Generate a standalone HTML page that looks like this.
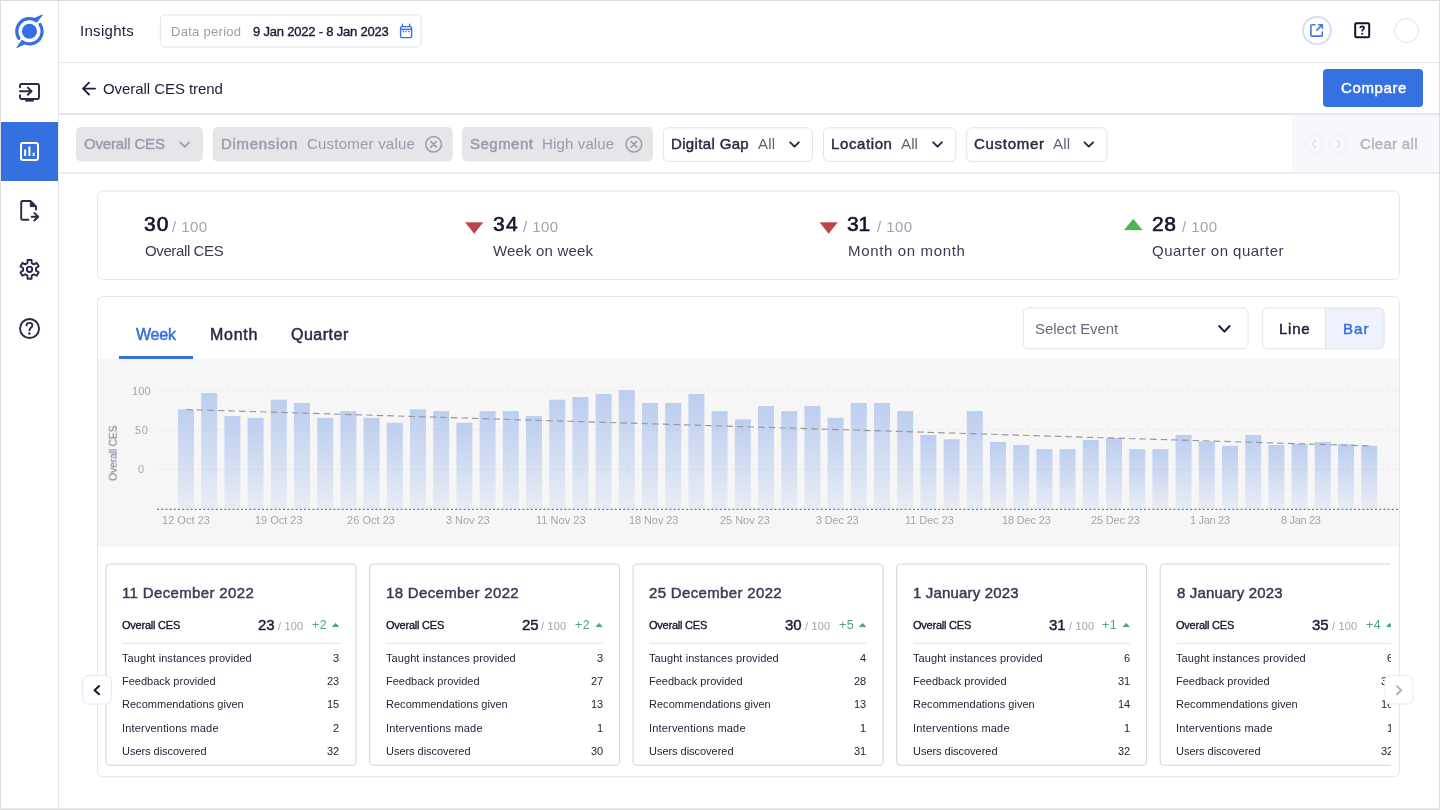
<!DOCTYPE html>
<html>
<head>
<meta charset="utf-8">
<title>Insights</title>
<style>
*{box-sizing:border-box;margin:0;padding:0}
html,body{width:1440px;height:810px;overflow:hidden;background:#fff}
body{font-family:"Liberation Sans",sans-serif;color:#1d1d3b;position:relative}
.abs{position:absolute}
svg{position:absolute;overflow:visible}
.t{position:absolute;white-space:nowrap;line-height:1;will-change:transform}
#frame{position:absolute;left:0;top:0;width:1440px;height:810px;border:1px solid #dcdcdc;border-bottom:0;box-shadow:inset 0 -1px 0 #dcdcdc, inset 0 -2px 0 #ebebeb;pointer-events:none;z-index:50}
#side{position:absolute;left:0;top:0;width:59px;height:810px;border-right:1px solid #e6e6ea;background:#fff}
#side .active{position:absolute;left:1px;top:122px;width:57px;height:59px;background:#366fe0}
.hline{position:absolute;left:59px;right:0;height:1px;background:#e8e8ec}
#clip{position:absolute;left:104px;top:560px;width:1287.4px;height:212px;overflow:hidden}
</style>
</head>
<body>

<div id="side"><div class="active"></div></div>
<!-- logo -->
<svg style="left:8px;top:8px" width="44" height="44" viewBox="0 0 44 44">
 <circle cx="21.46" cy="23.25" r="7.6" fill="#366fe0"/>
 <path d="M10.93 30.35 A12.7 12.7 0 0 1 28.38 12.6" fill="none" stroke="#366fe0" stroke-width="3.2" stroke-linecap="round"/>
 <path d="M32.11 16.33 A12.7 12.7 0 0 1 14.36 33.78" fill="none" stroke="#366fe0" stroke-width="3.2" stroke-linecap="round"/>
 <path d="M26.8 10.3 L34.4 6.9 L29.0 13.8 Z" fill="#366fe0" stroke="#366fe0" stroke-width="1" stroke-linejoin="round"/>
 <path d="M16.1 36.2 L8.8 39.4 L13.8 32.7 Z" fill="#366fe0" stroke="#366fe0" stroke-width="1" stroke-linejoin="round"/>
</svg>
<!-- monitor icon -->
<svg style="left:12px;top:74px" width="36" height="36" viewBox="0 0 36 36" fill="none" stroke="#2a2947" stroke-width="1.9">
 <path d="M8 13.2 V11.4 Q8 10 9.4 10 H25.6 Q27 10 27 11.4 V23.6 Q27 25 25.6 25 H9.4 Q8 25 8 23.6 V21.2" stroke-linecap="round"/>
 <path d="M8 17.2 H19.4 M15.8 13.6 L19.6 17.2 L15.8 20.8" stroke-linecap="round" stroke-linejoin="round"/>
 <rect x="13.3" y="25.6" width="8.5" height="2" fill="#2a2947" stroke="none"/>
</svg>
<!-- active icon -->
<svg style="left:20px;top:142px" width="19" height="19" viewBox="0 0 19 19" fill="none" stroke="#fff">
 <rect x="1" y="1" width="17" height="17" rx="2" stroke-width="2"/>
 <path d="M5.1 7.6 V13.9 M9.4 4.6 V13.9 M13.7 10.8 V13.9" stroke-width="2"/>
</svg>
<!-- doc export icon -->
<svg style="left:12px;top:192px" width="36" height="36" viewBox="0 0 36 36" fill="none" stroke="#2a2947" stroke-width="1.9" stroke-linecap="round" stroke-linejoin="round">
 <path d="M16.4 27.8 H10.6 Q9.2 27.8 9.2 26.4 V10.4 Q9.2 9 10.6 9 H18.5 L24 14.4 V17.6"/>
 <path d="M18.3 9.8 V14.6 H23.5 Z" fill="#2a2947" stroke-width="1"/>
 <path d="M19.6 24.7 H25.6 M22.3 20.9 L26.2 24.7 L22.3 28.5"/>
</svg>
<!-- gear -->
<svg style="left:12px;top:252px" width="36" height="36" viewBox="0 0 36 36" fill="none" stroke="#2a2947" stroke-width="1.9" stroke-linejoin="round">
 <path d="M15.44 11.09 L15.55 7.96 L19.55 7.96 L19.66 11.09 L21.91 12.40 L24.68 10.93 L26.68 14.38 L24.02 16.05 L24.02 18.65 L26.68 20.32 L24.68 23.77 L21.91 22.30 L19.66 23.61 L19.55 26.74 L15.55 26.74 L15.44 23.61 L13.19 22.30 L10.42 23.77 L8.42 20.32 L11.08 18.65 L11.08 16.05 L8.42 14.38 L10.42 10.93 L13.19 12.40Z"/>
 <circle cx="17.55" cy="17.35" r="2.7"/>
</svg>
<!-- help -->
<svg style="left:12px;top:310px" width="36" height="36" viewBox="0 0 36 36" fill="none" stroke="#2a2947" stroke-width="1.9" stroke-linecap="round" stroke-linejoin="round">
 <circle cx="17.55" cy="18.5" r="9.5"/>
 <path d="M14.5 15.4 Q14.6 12.9 17.5 12.9 Q20.4 12.9 20.4 15.3 Q20.4 16.8 18.6 18 Q17.5 18.9 17.5 20.2"/>
 <circle cx="17.4" cy="23.4" r="1.25" fill="#2a2947" stroke="none"/>
</svg>

<!-- top header -->
<svg style="left:398px;top:22px" width="18" height="18" viewBox="0 0 18 18" fill="none" stroke="#3a73e4" stroke-width="1.4">
 <rect x="2.6" y="4.6" width="11" height="11" rx="1.3"/>
 <path d="M2.6 7.4 H13.6" stroke-width="1.6"/>
 <path d="M4.5 2.2 V4.6 M11.6 2.2 V4.6" stroke-linecap="round"/>
 <path d="M4.7 9.6 H6.1 M7.4 9.6 H8.8 M10.2 9.6 H11.6" stroke-width="1.1"/>
</svg>
<div class="abs" style="left:1302px;top:15.5px;width:29.5px;height:29.5px;border:2px solid #d3dffa;border-radius:50%"></div>
<svg style="left:1309px;top:23px" width="15" height="15" viewBox="0 0 15 15" fill="none" stroke="#3f79e6" stroke-width="1.6" stroke-linejoin="round">
 <path d="M6.6 1.8 H3 Q1.9 1.8 1.9 2.9 V12 Q1.9 13.1 3 13.1 H12.2 Q13.3 13.1 13.3 12 V8.4"/>
 <path d="M7.4 7.6 L13.2 1.8 M9 1.8 H13.3 V6"/>
</svg>
<svg style="left:1353px;top:21px" width="18" height="18" viewBox="0 0 18 18" fill="none" stroke="#14142e">
 <rect x="2.2" y="2.2" width="14" height="14" rx="1.2" stroke-width="2"/>
 <path d="M7.2 7 Q7.3 5.3 9.2 5.3 Q11.1 5.3 11.1 6.9 Q11.1 7.9 10 8.6 Q9.2 9.2 9.2 10.4" stroke-width="1.7"/>
 <circle cx="9.2" cy="12.8" r="1.05" fill="#14142e" stroke="none"/>
</svg>
<div class="abs" style="left:1394px;top:18px;width:25px;height:25px;border:1px solid #e2e2e4;border-radius:50%"></div>
<div class="hline" style="top:62px"></div>

<!-- sub header -->
<svg style="left:80px;top:80px" width="18" height="18" viewBox="0 0 18 18" fill="none" stroke="#1d1d3b" stroke-width="1.8" stroke-linecap="round" stroke-linejoin="round">
 <path d="M15.1 8.6 H3.2 M9 2.7 L3 8.6 L9 14.5"/>
</svg>
<div class="abs" style="left:1323.3px;top:69px;width:100px;height:38px;background:#3671e2;border-radius:4px"></div>
<div class="hline" style="top:113px;height:2px;background:#e7e7e9"></div>

<!-- filter bar -->
<div class="abs" style="left:1292px;top:115px;width:147px;height:57px;background:#f7f8fd"></div>
<div class="abs" style="left:1304.5px;top:135px;width:18px;height:18px;border:1px solid #eeeef3;border-radius:50%;background:#f9f9fd"></div>
<div class="abs" style="left:1329px;top:135px;width:18px;height:18px;border:1px solid #eeeef3;border-radius:50%;background:#f9f9fd"></div>
<svg style="left:1304.5px;top:135px" width="43" height="18" viewBox="0 0 43 18" fill="none" stroke="#dcdce4" stroke-width="1.4" stroke-linecap="round" stroke-linejoin="round">
 <path d="M10.4 5.6 L7.2 9 L10.4 12.4 M32.2 5.6 L35.4 9 L32.2 12.4"/>
</svg>
<svg style="left:0;top:0" width="1440" height="200" viewBox="0 0 1440 200">
 <rect x="160.3" y="14.9" width="260.9" height="32.1" rx="4.5" fill="none" stroke="#e3e3e9"/>
 <rect x="76" y="127" width="127" height="34.5" rx="5" fill="#e6e6e9"/>
 <rect x="212.7" y="127" width="240" height="34.5" rx="5" fill="#e6e6e9"/>
 <rect x="462" y="127" width="191" height="34.5" rx="5" fill="#e6e6e9"/>
 <rect x="663.3" y="127.8" width="149.2" height="33.6" rx="5" fill="#fff" stroke="#e3e3e9"/>
 <rect x="823.5" y="127.8" width="132.3" height="33.6" rx="5" fill="#fff" stroke="#e3e3e9"/>
 <rect x="966.7" y="127.8" width="140.3" height="33.6" rx="5" fill="#fff" stroke="#e3e3e9"/>
</svg>
<svg style="left:0;top:0" width="1440" height="200" viewBox="0 0 1440 200" fill="none" stroke-linecap="round" stroke-linejoin="round">
 <path d="M180.3 142.4 L184.7 146.8 L189.1 142.4" stroke="#9b9aaa" stroke-width="1.7"/>
 <g stroke="#9b9aaa" stroke-width="1.5">
  <circle cx="433.6" cy="144.3" r="7.8"/><path d="M430.8 141.5 L436.4 147.1 M436.4 141.5 L430.8 147.1"/>
  <circle cx="633.9" cy="144.3" r="7.8"/><path d="M631.1 141.5 L636.7 147.1 M636.7 141.5 L631.1 147.1"/>
 </g>
 <g stroke="#2a2a48" stroke-width="1.9">
  <path d="M790.2 142.3 L794.5 146.6 L798.8 142.3"/>
  <path d="M933.2 142.3 L937.5 146.6 L941.8 142.3"/>
  <path d="M1084.5 142.3 L1088.8 146.6 L1093.1 142.3"/>
 </g>
</svg>
<div class="hline" style="top:172px;height:2px;background:#ededf0"></div>

<!-- stats -->
<svg style="left:0;top:185px" width="1440" height="100" viewBox="0 185 1440 100"><rect x="97.5" y="191" width="1302" height="88.5" rx="6" fill="#fff" stroke="#e5e5ea" stroke-width="1"/></svg>
<svg style="left:0;top:200px" width="1440" height="50" viewBox="0 200 1440 50">
 <path d="M465.4 222.6 H482.9 L474.15 233.5 Z M819.9 222.6 H837.4 L828.65 233.5 Z" fill="#bb4549" stroke="#bb4549" stroke-width="0.4" stroke-linejoin="round"/>
 <path d="M1124.3 229.9 H1142.2 L1133.25 219.1 Z" fill="#4cb750" stroke="#4cb750" stroke-width="0.4" stroke-linejoin="round"/>
</svg>

<!-- chart card -->
<svg style="left:0;top:290px" width="1440" height="495" viewBox="0 290 1440 495"><rect x="97.5" y="296.5" width="1302" height="480.2" rx="6" fill="#fff" stroke="#e5e5ea" stroke-width="1"/></svg>
<div class="abs" style="left:119px;top:356px;width:74px;height:3px;background:#366fe0"></div>
<svg style="left:1000px;top:300px" width="400" height="56" viewBox="1000 300 400 56">
 <rect x="1023.3" y="307.9" width="224.8" height="40.9" rx="5" fill="#fff" stroke="#e3e3e9"/>
 <path d="M1325.5 307.9 H1379.2 Q1384.2 307.9 1384.2 312.9 V343.8 Q1384.2 348.8 1379.2 348.8 H1325.5 Z" fill="#edf2fd"/>
 <rect x="1262.7" y="307.9" width="121.5" height="40.9" rx="5" fill="none" stroke="#e3e3e9"/>
 <path d="M1325.5 307.9 V348.8" stroke="#e3e3e9"/>
</svg>
<svg style="left:1216px;top:322px" width="16" height="14" viewBox="0 0 16 14" fill="none" stroke="#1d1d3b" stroke-width="2" stroke-linecap="round" stroke-linejoin="round"><path d="M3.2 4 L8.4 9.6 L13.6 4"/></svg>

<div class="abs" style="left:98px;top:359px;width:1301px;height:187.5px;background:#f6f6f6"></div>
<svg style="left:98px;top:359px" width="1301" height="188" viewBox="98 359 1301 188">
<defs><linearGradient id="bg" x1="0" y1="0" x2="0" y2="1"><stop offset="0" stop-color="#366fe0" stop-opacity="0.3"/><stop offset="1" stop-color="#366fe0" stop-opacity="0.07"/></linearGradient></defs>
<path d="M157 390.6 H1398" stroke="#e4e4e6" stroke-width="1" stroke-dasharray="2 3"/>
<path d="M157 430 H1398" stroke="#e4e4e6" stroke-width="1" stroke-dasharray="2 3"/>
<path d="M157 469.4 H1398" stroke="#e4e4e6" stroke-width="1" stroke-dasharray="2 3"/>
<rect x="178.0" y="409.4" width="16" height="99.6" fill="url(#bg)"/>
<rect x="201.2" y="393.0" width="16" height="116.0" fill="url(#bg)"/>
<rect x="224.4" y="416.1" width="16" height="92.9" fill="url(#bg)"/>
<rect x="247.6" y="417.8" width="16" height="91.2" fill="url(#bg)"/>
<rect x="270.8" y="399.7" width="16" height="109.3" fill="url(#bg)"/>
<rect x="294.0" y="403.0" width="16" height="106.0" fill="url(#bg)"/>
<rect x="317.2" y="417.8" width="16" height="91.2" fill="url(#bg)"/>
<rect x="340.4" y="411.1" width="16" height="97.9" fill="url(#bg)"/>
<rect x="363.6" y="417.8" width="16" height="91.2" fill="url(#bg)"/>
<rect x="386.8" y="422.8" width="16" height="86.2" fill="url(#bg)"/>
<rect x="410.0" y="409.4" width="16" height="99.6" fill="url(#bg)"/>
<rect x="433.2" y="411.1" width="16" height="97.9" fill="url(#bg)"/>
<rect x="456.4" y="422.8" width="16" height="86.2" fill="url(#bg)"/>
<rect x="479.6" y="411.1" width="16" height="97.9" fill="url(#bg)"/>
<rect x="502.8" y="411.1" width="16" height="97.9" fill="url(#bg)"/>
<rect x="526.0" y="416.1" width="16" height="92.9" fill="url(#bg)"/>
<rect x="549.2" y="399.7" width="16" height="109.3" fill="url(#bg)"/>
<rect x="572.4" y="397.0" width="16" height="112.0" fill="url(#bg)"/>
<rect x="595.6" y="393.9" width="16" height="115.1" fill="url(#bg)"/>
<rect x="618.8" y="390.3" width="16" height="118.7" fill="url(#bg)"/>
<rect x="642.0" y="403.0" width="16" height="106.0" fill="url(#bg)"/>
<rect x="665.2" y="403.0" width="16" height="106.0" fill="url(#bg)"/>
<rect x="688.4" y="393.9" width="16" height="115.1" fill="url(#bg)"/>
<rect x="711.6" y="411.1" width="16" height="97.9" fill="url(#bg)"/>
<rect x="734.8" y="419.4" width="16" height="89.6" fill="url(#bg)"/>
<rect x="758.0" y="406.1" width="16" height="102.9" fill="url(#bg)"/>
<rect x="781.2" y="411.1" width="16" height="97.9" fill="url(#bg)"/>
<rect x="804.4" y="406.1" width="16" height="102.9" fill="url(#bg)"/>
<rect x="827.6" y="417.8" width="16" height="91.2" fill="url(#bg)"/>
<rect x="850.8" y="403.0" width="16" height="106.0" fill="url(#bg)"/>
<rect x="874.0" y="403.0" width="16" height="106.0" fill="url(#bg)"/>
<rect x="897.2" y="411.1" width="16" height="97.9" fill="url(#bg)"/>
<rect x="920.4" y="435.0" width="16" height="74.0" fill="url(#bg)"/>
<rect x="943.6" y="439.2" width="16" height="69.8" fill="url(#bg)"/>
<rect x="966.8" y="411.1" width="16" height="97.9" fill="url(#bg)"/>
<rect x="990.0" y="441.9" width="16" height="67.1" fill="url(#bg)"/>
<rect x="1013.2" y="445.0" width="16" height="64.0" fill="url(#bg)"/>
<rect x="1036.4" y="449.2" width="16" height="59.8" fill="url(#bg)"/>
<rect x="1059.6" y="449.2" width="16" height="59.8" fill="url(#bg)"/>
<rect x="1082.8" y="440.0" width="16" height="69.0" fill="url(#bg)"/>
<rect x="1106.0" y="438.0" width="16" height="71.0" fill="url(#bg)"/>
<rect x="1129.2" y="449.2" width="16" height="59.8" fill="url(#bg)"/>
<rect x="1152.4" y="449.2" width="16" height="59.8" fill="url(#bg)"/>
<rect x="1175.6" y="435.0" width="16" height="74.0" fill="url(#bg)"/>
<rect x="1198.8" y="441.4" width="16" height="67.6" fill="url(#bg)"/>
<rect x="1222.0" y="445.8" width="16" height="63.2" fill="url(#bg)"/>
<rect x="1245.2" y="435.0" width="16" height="74.0" fill="url(#bg)"/>
<rect x="1268.4" y="445.0" width="16" height="64.0" fill="url(#bg)"/>
<rect x="1291.6" y="443.9" width="16" height="65.1" fill="url(#bg)"/>
<rect x="1314.8" y="441.9" width="16" height="67.1" fill="url(#bg)"/>
<rect x="1338.0" y="444.2" width="16" height="64.8" fill="url(#bg)"/>
<rect x="1361.2" y="445.8" width="16" height="63.2" fill="url(#bg)"/>
<path d="M186 409.5 L1369 445.9" stroke="#989898" stroke-width="1.15" stroke-dasharray="6.5 4.1" fill="none"/>
<path d="M157 509.3 H1399" stroke="#5c5c66" stroke-width="1" stroke-dasharray="2 2.2"/>
</svg>
<div class="t" style="left:82.9px;top:447.9px;width:60px;text-align:center;font-size:10.5px;color:#77778b;transform:rotate(-90deg);letter-spacing:-0.22px">Overall CES</div>
<div class="t" style="left:79.80px;top:23.30px;font-size:15px;color:#1d1d3b;letter-spacing:0.300px;">Insights</div>
<div class="t" style="left:170.90px;top:25.20px;font-size:13px;color:#9c9cab;letter-spacing:0.288px;">Data period</div>
<div class="t" style="left:253.40px;top:25.20px;font-size:13px;color:#1d1d3b;-webkit-text-stroke:0.40px #1d1d3b;letter-spacing:-0.206px;">9 Jan 2022 - 8 Jan 2023</div>
<div class="t" style="left:103.20px;top:80.90px;font-size:15px;color:#1d1d3b;letter-spacing:-0.062px;">Overall CES trend</div>
<div class="t" style="left:1341.10px;top:80.20px;font-size:15px;color:#fff;-webkit-text-stroke:0.46px #fff;letter-spacing:0.616px;">Compare</div>
<div class="t" style="left:84.40px;top:136.30px;font-size:15px;color:#9b9aaa;-webkit-text-stroke:0.46px #9b9aaa;letter-spacing:-0.163px;">Overall CES</div>
<div class="t" style="left:221.30px;top:136.30px;font-size:15px;color:#9b9aaa;-webkit-text-stroke:0.46px #9b9aaa;letter-spacing:0.691px;">Dimension</div>
<div class="t" style="left:306.90px;top:136.30px;font-size:15px;color:#9b9aaa;letter-spacing:0.219px;">Customer value</div>
<div class="t" style="left:470.15px;top:136.30px;font-size:15px;color:#9b9aaa;-webkit-text-stroke:0.46px #9b9aaa;letter-spacing:0.484px;">Segment</div>
<div class="t" style="left:541.90px;top:136.30px;font-size:15px;color:#9b9aaa;letter-spacing:0.145px;">High value</div>
<div class="t" style="left:670.90px;top:136.30px;font-size:15px;color:#2a2a48;-webkit-text-stroke:0.46px #2a2a48;letter-spacing:0.350px;">Digital Gap</div>
<div class="t" style="left:757.90px;top:136.30px;font-size:15px;color:#5e5e74;letter-spacing:0.264px;">All</div>
<div class="t" style="left:831.15px;top:136.30px;font-size:15px;color:#2a2a48;-webkit-text-stroke:0.46px #2a2a48;letter-spacing:0.604px;">Location</div>
<div class="t" style="left:901.40px;top:136.30px;font-size:15px;color:#5e5e74;letter-spacing:0.139px;">All</div>
<div class="t" style="left:974.40px;top:136.30px;font-size:15px;color:#2a2a48;-webkit-text-stroke:0.46px #2a2a48;letter-spacing:0.703px;">Customer</div>
<div class="t" style="left:1052.65px;top:136.30px;font-size:15px;color:#5e5e74;letter-spacing:0.264px;">All</div>
<div class="t" style="left:1360.40px;top:136.30px;font-size:15px;color:#b4b4bd;-webkit-text-stroke:0.46px #b4b4bd;letter-spacing:0.309px;">Clear all</div>
<div class="t" style="left:144.10px;top:213.42px;font-size:21px;color:#15152f;-webkit-text-stroke:0.65px #15152f;letter-spacing:1.141px;">30</div>
<div class="t" style="left:171.90px;top:218.50px;font-size:15px;color:#a3a3b1;letter-spacing:0.406px;">/ 100</div>
<div class="t" style="left:144.90px;top:243.30px;font-size:15px;color:#3a3a56;letter-spacing:-0.383px;">Overall CES</div>
<div class="t" style="left:493.10px;top:213.42px;font-size:21px;color:#15152f;-webkit-text-stroke:0.65px #15152f;letter-spacing:1.441px;">34</div>
<div class="t" style="left:522.80px;top:218.50px;font-size:15px;color:#a3a3b1;letter-spacing:0.456px;">/ 100</div>
<div class="t" style="left:493.10px;top:243.30px;font-size:15px;color:#3a3a56;letter-spacing:0.163px;">Week on week</div>
<div class="t" style="left:847.10px;top:213.42px;font-size:21px;color:#15152f;-webkit-text-stroke:0.65px #15152f;letter-spacing:-0.259px;">31</div>
<div class="t" style="left:877.00px;top:218.50px;font-size:15px;color:#a3a3b1;letter-spacing:0.456px;">/ 100</div>
<div class="t" style="left:847.70px;top:243.30px;font-size:15px;color:#3a3a56;letter-spacing:0.653px;">Month on month</div>
<div class="t" style="left:1152.40px;top:213.42px;font-size:21px;color:#15152f;-webkit-text-stroke:0.65px #15152f;letter-spacing:0.541px;">28</div>
<div class="t" style="left:1181.60px;top:218.50px;font-size:15px;color:#a3a3b1;letter-spacing:0.456px;">/ 100</div>
<div class="t" style="left:1152.30px;top:243.30px;font-size:15px;color:#3a3a56;letter-spacing:0.476px;">Quarter on quarter</div>
<div class="t" style="left:135.65px;top:327.06px;font-size:16px;color:#366fe0;-webkit-text-stroke:0.50px #366fe0;letter-spacing:-0.220px;">Week</div>
<div class="t" style="left:210.00px;top:327.06px;font-size:16px;color:#2a2a48;-webkit-text-stroke:0.50px #2a2a48;letter-spacing:0.708px;">Month</div>
<div class="t" style="left:291.30px;top:327.06px;font-size:16px;color:#2a2a48;-webkit-text-stroke:0.50px #2a2a48;letter-spacing:0.508px;">Quarter</div>
<div class="t" style="left:1034.90px;top:320.90px;font-size:15px;color:#6a6a80;letter-spacing:-0.093px;">Select Event</div>
<div class="t" style="left:1278.60px;top:320.90px;font-size:15px;color:#1d1d3b;-webkit-text-stroke:0.46px #1d1d3b;letter-spacing:0.747px;">Line</div>
<div class="t" style="left:1343.00px;top:320.90px;font-size:15px;color:#366fe0;-webkit-text-stroke:0.46px #366fe0;letter-spacing:1.028px;">Bar</div>
<div class="t" style="left:132.00px;top:385.89px;font-size:11px;color:#a5a5b0;letter-spacing:0.120px;">100</div>
<div class="t" style="left:134.90px;top:425.09px;font-size:11px;color:#a5a5b0;letter-spacing:0.650px;">50</div>
<div class="t" style="left:137.50px;top:464.49px;font-size:11px;color:#a5a5b0;">0</div>
<div class="t" style="left:161.70px;top:514.59px;font-size:11px;color:#a5a5b0;letter-spacing:0.025px;">12 Oct 23</div>
<div class="t" style="left:254.70px;top:514.59px;font-size:11px;color:#a5a5b0;letter-spacing:-0.025px;">19 Oct 23</div>
<div class="t" style="left:347.20px;top:514.59px;font-size:11px;color:#a5a5b0;letter-spacing:0.037px;">26 Oct 23</div>
<div class="t" style="left:445.90px;top:514.59px;font-size:11px;color:#a5a5b0;letter-spacing:-0.047px;">3 Nov 23</div>
<div class="t" style="left:536.10px;top:514.59px;font-size:11px;color:#a5a5b0;letter-spacing:0.021px;">11 Nov 23</div>
<div class="t" style="left:628.70px;top:514.59px;font-size:11px;color:#a5a5b0;letter-spacing:-0.095px;">18 Nov 23</div>
<div class="t" style="left:719.80px;top:514.59px;font-size:11px;color:#a5a5b0;letter-spacing:-0.045px;">25 Nov 23</div>
<div class="t" style="left:816.10px;top:514.59px;font-size:11px;color:#a5a5b0;letter-spacing:-0.190px;">3 Dec 23</div>
<div class="t" style="left:905.40px;top:514.59px;font-size:11px;color:#a5a5b0;letter-spacing:-0.066px;">11 Dec 23</div>
<div class="t" style="left:1001.70px;top:514.59px;font-size:11px;color:#a5a5b0;letter-spacing:-0.157px;">18 Dec 23</div>
<div class="t" style="left:1090.90px;top:514.59px;font-size:11px;color:#a5a5b0;letter-spacing:-0.157px;">25 Dec 23</div>
<div class="t" style="left:1189.60px;top:514.59px;font-size:11px;color:#a5a5b0;letter-spacing:-0.315px;">1 Jan 23</div>
<div class="t" style="left:1281.20px;top:514.59px;font-size:11px;color:#a5a5b0;letter-spacing:-0.329px;">8 Jan 23</div>
<div id="clip">
<svg style="left:0;top:0" width="1290" height="212" viewBox="0 0 1290 212">
<rect x="2.00" y="4" width="250" height="201.3" rx="4" fill="#fff" stroke="#d4d4dc" stroke-width="1.1"/>
<path d="M18.60 83.4 H235.60" stroke="#e4e4e8" stroke-width="1"/>
<path d="M228.60 66.6 L231.55 63.4 L234.50 66.6 Z" fill="#4aa77a" stroke="#4aa77a" stroke-width="1" stroke-linejoin="round"/>
<rect x="265.55" y="4" width="250" height="201.3" rx="4" fill="#fff" stroke="#d4d4dc" stroke-width="1.1"/>
<path d="M282.15 83.4 H499.15" stroke="#e4e4e8" stroke-width="1"/>
<path d="M492.15 66.6 L495.10 63.4 L498.05 66.6 Z" fill="#4aa77a" stroke="#4aa77a" stroke-width="1" stroke-linejoin="round"/>
<rect x="529.10" y="4" width="250" height="201.3" rx="4" fill="#fff" stroke="#d4d4dc" stroke-width="1.1"/>
<path d="M545.70 83.4 H762.70" stroke="#e4e4e8" stroke-width="1"/>
<path d="M755.70 66.6 L758.65 63.4 L761.60 66.6 Z" fill="#4aa77a" stroke="#4aa77a" stroke-width="1" stroke-linejoin="round"/>
<rect x="792.65" y="4" width="250" height="201.3" rx="4" fill="#fff" stroke="#d4d4dc" stroke-width="1.1"/>
<path d="M809.25 83.4 H1026.25" stroke="#e4e4e8" stroke-width="1"/>
<path d="M1019.25 66.6 L1022.20 63.4 L1025.15 66.6 Z" fill="#4aa77a" stroke="#4aa77a" stroke-width="1" stroke-linejoin="round"/>
<rect x="1056.20" y="4" width="250" height="201.3" rx="4" fill="#fff" stroke="#d4d4dc" stroke-width="1.1"/>
<path d="M1072.80 83.4 H1289.80" stroke="#e4e4e8" stroke-width="1"/>
<path d="M1282.80 66.6 L1285.75 63.4 L1288.70 66.6 Z" fill="#4aa77a" stroke="#4aa77a" stroke-width="1" stroke-linejoin="round"/>
</svg>
<div class="t" style="left:18.30px;top:25.10px;font-size:15px;color:#3a3a58;-webkit-text-stroke:0.46px #3a3a58;letter-spacing:0.355px;">11 December 2022</div>
<div class="t" style="left:18.10px;top:60.19px;font-size:11px;color:#16162a;-webkit-text-stroke:0.34px #16162a;letter-spacing:-0.228px;">Overall CES</div>
<div class="t" style="left:154.10px;top:57.30px;font-size:15px;color:#1d1d3b;-webkit-text-stroke:0.46px #1d1d3b;letter-spacing:-0.187px;">23</div>
<div class="t" style="left:173.90px;top:60.69px;font-size:11px;color:#a3a3b1;letter-spacing:0.183px;">/ 100</div>
<div class="t" style="left:207.70px;top:58.82px;font-size:12.5px;color:#4aa77a;letter-spacing:0.434px;">+2</div>
<div class="t" style="left:18.10px;top:93.04px;font-size:11px;color:#24243a;letter-spacing:0.079px;">Taught instances provided</div>
<div class="t" style="left:229.08px;top:93.04px;font-size:11px;color:#24243a;">3</div>
<div class="t" style="left:18.10px;top:116.04px;font-size:11px;color:#24243a;">Feedback provided</div>
<div class="t" style="left:222.96px;top:116.04px;font-size:11px;color:#24243a;">23</div>
<div class="t" style="left:18.10px;top:139.04px;font-size:11px;color:#24243a;letter-spacing:0.031px;">Recommendations given</div>
<div class="t" style="left:222.96px;top:139.04px;font-size:11px;color:#24243a;">15</div>
<div class="t" style="left:18.10px;top:163.04px;font-size:11px;color:#24243a;letter-spacing:0.173px;">Interventions made</div>
<div class="t" style="left:229.08px;top:163.04px;font-size:11px;color:#24243a;">2</div>
<div class="t" style="left:18.10px;top:186.04px;font-size:11px;color:#24243a;letter-spacing:-0.032px;">Users discovered</div>
<div class="t" style="left:222.96px;top:186.04px;font-size:11px;color:#24243a;">32</div>
<div class="t" style="left:281.85px;top:25.10px;font-size:15px;color:#3a3a58;-webkit-text-stroke:0.46px #3a3a58;letter-spacing:0.340px;">18 December 2022</div>
<div class="t" style="left:281.65px;top:60.19px;font-size:11px;color:#16162a;-webkit-text-stroke:0.34px #16162a;letter-spacing:-0.228px;">Overall CES</div>
<div class="t" style="left:417.65px;top:57.30px;font-size:15px;color:#1d1d3b;-webkit-text-stroke:0.46px #1d1d3b;letter-spacing:-0.188px;">25</div>
<div class="t" style="left:437.45px;top:60.69px;font-size:11px;color:#a3a3b1;letter-spacing:0.183px;">/ 100</div>
<div class="t" style="left:471.25px;top:58.82px;font-size:12.5px;color:#4aa77a;letter-spacing:0.434px;">+2</div>
<div class="t" style="left:281.65px;top:93.04px;font-size:11px;color:#24243a;letter-spacing:0.079px;">Taught instances provided</div>
<div class="t" style="left:492.63px;top:93.04px;font-size:11px;color:#24243a;">3</div>
<div class="t" style="left:281.65px;top:116.04px;font-size:11px;color:#24243a;">Feedback provided</div>
<div class="t" style="left:486.51px;top:116.04px;font-size:11px;color:#24243a;">27</div>
<div class="t" style="left:281.65px;top:139.04px;font-size:11px;color:#24243a;letter-spacing:0.031px;">Recommendations given</div>
<div class="t" style="left:486.51px;top:139.04px;font-size:11px;color:#24243a;">13</div>
<div class="t" style="left:281.65px;top:163.04px;font-size:11px;color:#24243a;letter-spacing:0.173px;">Interventions made</div>
<div class="t" style="left:492.63px;top:163.04px;font-size:11px;color:#24243a;">1</div>
<div class="t" style="left:281.65px;top:186.04px;font-size:11px;color:#24243a;letter-spacing:-0.032px;">Users discovered</div>
<div class="t" style="left:486.51px;top:186.04px;font-size:11px;color:#24243a;">30</div>
<div class="t" style="left:545.40px;top:25.10px;font-size:15px;color:#3a3a58;-webkit-text-stroke:0.46px #3a3a58;letter-spacing:0.340px;">25 December 2022</div>
<div class="t" style="left:545.20px;top:60.19px;font-size:11px;color:#16162a;-webkit-text-stroke:0.34px #16162a;letter-spacing:-0.228px;">Overall CES</div>
<div class="t" style="left:681.20px;top:57.30px;font-size:15px;color:#1d1d3b;-webkit-text-stroke:0.46px #1d1d3b;letter-spacing:-0.187px;">30</div>
<div class="t" style="left:701.00px;top:60.69px;font-size:11px;color:#a3a3b1;letter-spacing:0.183px;">/ 100</div>
<div class="t" style="left:734.80px;top:58.82px;font-size:12.5px;color:#4aa77a;letter-spacing:0.434px;">+5</div>
<div class="t" style="left:545.20px;top:93.04px;font-size:11px;color:#24243a;letter-spacing:0.079px;">Taught instances provided</div>
<div class="t" style="left:756.18px;top:93.04px;font-size:11px;color:#24243a;">4</div>
<div class="t" style="left:545.20px;top:116.04px;font-size:11px;color:#24243a;">Feedback provided</div>
<div class="t" style="left:750.06px;top:116.04px;font-size:11px;color:#24243a;">28</div>
<div class="t" style="left:545.20px;top:139.04px;font-size:11px;color:#24243a;letter-spacing:0.031px;">Recommendations given</div>
<div class="t" style="left:750.06px;top:139.04px;font-size:11px;color:#24243a;">13</div>
<div class="t" style="left:545.20px;top:163.04px;font-size:11px;color:#24243a;letter-spacing:0.173px;">Interventions made</div>
<div class="t" style="left:756.18px;top:163.04px;font-size:11px;color:#24243a;">1</div>
<div class="t" style="left:545.20px;top:186.04px;font-size:11px;color:#24243a;letter-spacing:-0.032px;">Users discovered</div>
<div class="t" style="left:750.06px;top:186.04px;font-size:11px;color:#24243a;">31</div>
<div class="t" style="left:808.95px;top:25.10px;font-size:15px;color:#3a3a58;-webkit-text-stroke:0.46px #3a3a58;letter-spacing:0.175px;">1 January 2023</div>
<div class="t" style="left:808.75px;top:60.19px;font-size:11px;color:#16162a;-webkit-text-stroke:0.34px #16162a;letter-spacing:-0.228px;">Overall CES</div>
<div class="t" style="left:944.75px;top:57.30px;font-size:15px;color:#1d1d3b;-webkit-text-stroke:0.46px #1d1d3b;letter-spacing:-0.188px;">31</div>
<div class="t" style="left:964.55px;top:60.69px;font-size:11px;color:#a3a3b1;letter-spacing:0.183px;">/ 100</div>
<div class="t" style="left:998.35px;top:58.82px;font-size:12.5px;color:#4aa77a;letter-spacing:0.434px;">+1</div>
<div class="t" style="left:808.75px;top:93.04px;font-size:11px;color:#24243a;letter-spacing:0.079px;">Taught instances provided</div>
<div class="t" style="left:1019.73px;top:93.04px;font-size:11px;color:#24243a;">6</div>
<div class="t" style="left:808.75px;top:116.04px;font-size:11px;color:#24243a;">Feedback provided</div>
<div class="t" style="left:1013.61px;top:116.04px;font-size:11px;color:#24243a;">31</div>
<div class="t" style="left:808.75px;top:139.04px;font-size:11px;color:#24243a;letter-spacing:0.031px;">Recommendations given</div>
<div class="t" style="left:1013.61px;top:139.04px;font-size:11px;color:#24243a;">14</div>
<div class="t" style="left:808.75px;top:163.04px;font-size:11px;color:#24243a;letter-spacing:0.173px;">Interventions made</div>
<div class="t" style="left:1019.73px;top:163.04px;font-size:11px;color:#24243a;">1</div>
<div class="t" style="left:808.75px;top:186.04px;font-size:11px;color:#24243a;letter-spacing:-0.032px;">Users discovered</div>
<div class="t" style="left:1013.61px;top:186.04px;font-size:11px;color:#24243a;">32</div>
<div class="t" style="left:1072.50px;top:25.10px;font-size:15px;color:#3a3a58;-webkit-text-stroke:0.46px #3a3a58;letter-spacing:0.175px;">8 January 2023</div>
<div class="t" style="left:1072.30px;top:60.19px;font-size:11px;color:#16162a;-webkit-text-stroke:0.34px #16162a;letter-spacing:-0.228px;">Overall CES</div>
<div class="t" style="left:1208.30px;top:57.30px;font-size:15px;color:#1d1d3b;-webkit-text-stroke:0.46px #1d1d3b;letter-spacing:-0.188px;">35</div>
<div class="t" style="left:1228.10px;top:60.69px;font-size:11px;color:#a3a3b1;letter-spacing:0.183px;">/ 100</div>
<div class="t" style="left:1261.90px;top:58.82px;font-size:12.5px;color:#4aa77a;letter-spacing:0.434px;">+4</div>
<div class="t" style="left:1072.30px;top:93.04px;font-size:11px;color:#24243a;letter-spacing:0.079px;">Taught instances provided</div>
<div class="t" style="left:1283.28px;top:93.04px;font-size:11px;color:#24243a;">6</div>
<div class="t" style="left:1072.30px;top:116.04px;font-size:11px;color:#24243a;">Feedback provided</div>
<div class="t" style="left:1277.16px;top:116.04px;font-size:11px;color:#24243a;">35</div>
<div class="t" style="left:1072.30px;top:139.04px;font-size:11px;color:#24243a;letter-spacing:0.031px;">Recommendations given</div>
<div class="t" style="left:1277.16px;top:139.04px;font-size:11px;color:#24243a;">16</div>
<div class="t" style="left:1072.30px;top:163.04px;font-size:11px;color:#24243a;letter-spacing:0.173px;">Interventions made</div>
<div class="t" style="left:1283.28px;top:163.04px;font-size:11px;color:#24243a;">1</div>
<div class="t" style="left:1072.30px;top:186.04px;font-size:11px;color:#24243a;letter-spacing:-0.032px;">Users discovered</div>
<div class="t" style="left:1277.16px;top:186.04px;font-size:11px;color:#24243a;">32</div>
</div>

<svg style="left:70px;top:665px;z-index:5" width="1360" height="50" viewBox="70 665 1360 50" fill="none" stroke-linecap="round" stroke-linejoin="round">
 <rect x="82.7" y="675.7" width="28.6" height="28.3" rx="5" fill="#fff" stroke="#dde6fb"/>
 <path d="M99.1 686.1 L94.6 690.2 L99.1 694.3" stroke="#14142e" stroke-width="2"/>
 <rect x="1384.7" y="675.7" width="28.3" height="28.3" rx="5" fill="#fff" stroke="#ebebf0"/>
 <path d="M1396.9 686.1 L1401.2 690.2 L1396.9 694.3" stroke="#b0b0c4" stroke-width="2"/>
</svg>
<div id="frame"></div>
</body>
</html>
